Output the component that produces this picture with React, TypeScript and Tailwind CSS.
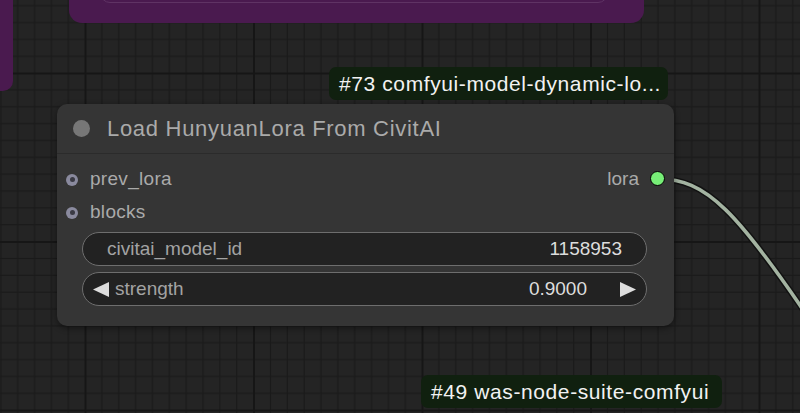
import React from 'react';

const CELL = 16.85;

const GridBackground: React.FC = () => (
  <svg className="absolute inset-0" width="800" height="413">
    <defs>
      <pattern
        id="canvas-grid"
        width={CELL * 10}
        height={CELL * 10}
        patternUnits="userSpaceOnUse"
        patternTransform="translate(84.5 72.5)"
      >
        <rect width={CELL * 10} height={CELL * 10} fill="#242424" />
        {Array.from({ length: 10 }).map((_, i) => (
          <g key={i}>
            <rect x={i * CELL} y={0} width={1.2} height={CELL * 10} fill="#1a1a1a" />
            <rect x={0} y={i * CELL} width={CELL * 10} height={1.2} fill="#1a1a1a" />
          </g>
        ))}
        <rect x={0} y={0} width={2} height={CELL * 10} fill="#161616" />
        <rect x={0} y={0} width={CELL * 10} height={2} fill="#161616" />
      </pattern>
    </defs>
    <rect width="800" height="413" fill="url(#canvas-grid)" />
  </svg>
);

const Wire: React.FC = () => (
  <svg className="absolute inset-0 pointer-events-none" width="800" height="413">
    <path d="M 658 179 C 705 179, 735 205, 830 350" fill="none" stroke="#111" strokeWidth={6.5} />
    <path d="M 658 179 C 705 179, 735 205, 830 350" fill="none" stroke="#a3b3a1" strokeWidth={3.6} />
  </svg>
);

const SourceBadge: React.FC<{ text: string; className: string }> = ({ text, className }) => (
  <div
    className={`absolute h-[33px] flex items-center px-[10px] rounded-[7px] bg-[#10200f] text-[#f2f2f2] text-[21px] tracking-[0.6px] whitespace-nowrap ${className}`}
  >
    {text}
  </div>
);

const InputSlot: React.FC<{ label: string }> = ({ label }) => (
  <div className="h-[33px] flex items-center pl-[9px]">
    <div className="w-[12px] h-[12px] rounded-full bg-[#8a8a9e] flex items-center justify-center">
      <div className="w-[5px] h-[5px] rounded-full bg-[#3a3a44]" />
    </div>
    <span className="ml-[12px] text-[19px] tracking-[0.3px] text-[#aaaaaa]">{label}</span>
  </div>
);

const Arrow: React.FC<{ dir: 'left' | 'right' }> = ({ dir }) => (
  <svg width="16" height="15" viewBox="0 0 16 15">
    {dir === 'left' ? (
      <polygon points="16,0 16,15 0,7.5" fill="#dddddd" />
    ) : (
      <polygon points="0,0 0,15 16,7.5" fill="#dddddd" />
    )}
  </svg>
);

const LoraNode: React.FC = () => (
  <div className="absolute left-[57px] top-[104px] w-[617px] rounded-[10px] bg-[#353535] shadow-[0_2px_6px_rgba(0,0,0,0.45)]">
    {/* Title */}
    <div className="h-[50px] flex items-center pl-[16px] border-b border-[#2b2b2b]">
      <div className="w-[17px] h-[17px] rounded-full bg-[#777777]" />
      <span className="ml-[17px] text-[22px] tracking-[0.7px] text-[#aaaaaa]">Load HunyuanLora From CivitAI</span>
    </div>

    <div className="pt-[9px] pb-[20px]">
      <div className="relative">
        <InputSlot label="prev_lora" />
        <InputSlot label="blocks" />
        {/* output */}
        <div className="absolute right-[9px] top-0 h-[33px] flex items-center">
          <span className="text-[19px] text-[#aaaaaa]">lora</span>
          <div className="ml-[11px] -mt-[3px] w-[15px] h-[15px] rounded-full bg-[#77ee77] border-[1.5px] border-black" />
        </div>
      </div>

      {/* Widgets */}
      <div className="mt-[3px] ml-[25px] mr-[27px] flex flex-col gap-[6px]">
        <div className="h-[34px] rounded-full bg-[#222222] border border-[#6e6e6e] flex items-center justify-between px-[24px] text-[19px]">
          <span className="text-[#a3a3a3]">civitai_model_id</span>
          <span className="text-[#dddddd]">1158953</span>
        </div>
        <div className="h-[34px] rounded-full bg-[#222222] border border-[#6e6e6e] flex items-center pl-[10px] pr-[10px] text-[19px]">
          <Arrow dir="left" />
          <span className="ml-[6px] text-[#a3a3a3]">strength</span>
          <span className="ml-auto text-[#dddddd]">0.9000</span>
          <span className="ml-[33px] flex"><Arrow dir="right" /></span>
        </div>
      </div>
    </div>
  </div>
);

const App: React.FC = () => {
  return (
    <div className="relative w-[800px] h-[413px] overflow-hidden bg-[#222222] font-['Liberation_Sans',Arial,sans-serif]">
      <GridBackground />

      {/* Group frames (purple) */}
      <div className="absolute left-0 top-0 w-[13px] h-[91px] rounded-br-[10px] bg-[#4a1a4f]" />
      <div className="absolute left-[69px] top-0 w-[575px] h-[23px] rounded-b-[13px] bg-[#4a1a4f] overflow-hidden">
        <div className="absolute left-[31px] -top-[30px] w-[508px] h-[32.5px] rounded-b-[10px] border border-[#5f3364]" />
      </div>

      <Wire />

      <SourceBadge text="#73 comfyui-model-dynamic-lo..." className="left-[329px] top-[67px] w-[339px]" />

      <LoraNode />

      <SourceBadge text="#49 was-node-suite-comfyui" className="left-[421px] top-[375px] w-[301px]" />
    </div>
  );
};

export default App;
